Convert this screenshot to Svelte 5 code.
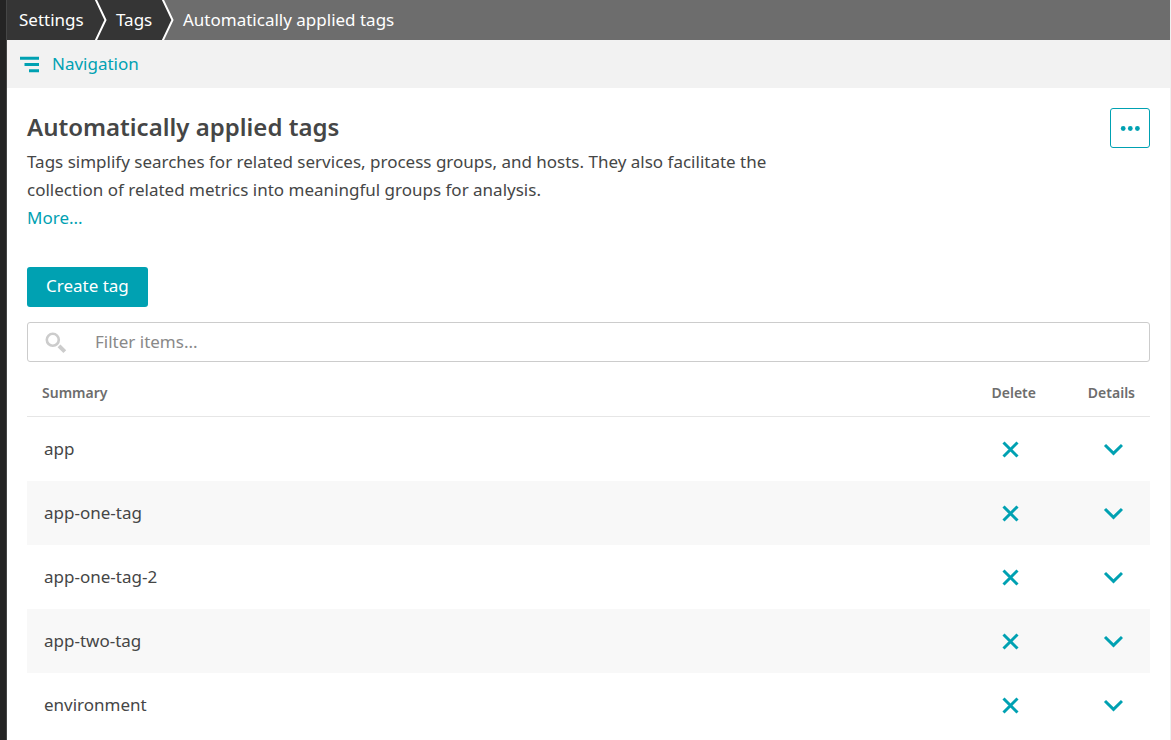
<script>
  const tags = ['app', 'app-one-tag', 'app-one-tag-2', 'app-two-tag', 'environment'];
  let filter = $state('');
  let shown = $derived(tags.filter((tag) => tag.includes(filter.trim().toLowerCase())));
</script>

<div class="shell">
  <div class="page">
    <nav class="crumbs" aria-label="Breadcrumb">
      <a class="crumb first" href="#settings">Settings</a>
      <svg class="sep" width="14" height="40" viewBox="0 0 14 40" aria-hidden="true">
        <path class="dark" d="M0 0H14V40H0Z" />
        <path class="line" d="M0.5 -1L10.5 20L0.5 41" />
      </svg>
      <a class="crumb second" href="#tags">Tags</a>
      <svg class="sep" width="14" height="40" viewBox="0 0 14 40" aria-hidden="true">
        <path class="dark" d="M0 0H0.5L10.5 20L0.5 40H0Z" />
        <path class="line" d="M0.5 -1L10.5 20L0.5 41" />
      </svg>
      <span class="crumb current" aria-current="page">Automatically applied tags</span>
    </nav>

    <div class="navbar">
      <a class="navlink" href="#navigation">
        <svg width="20" height="18" viewBox="0 0 20 18" aria-hidden="true">
          <path d="M0 3.3H19M4.5 9.5H19M9 15.8H19" />
        </svg>
        Navigation
      </a>
    </div>

    <main>
      <header>
        <div class="intro">
          <h1>Automatically applied tags</h1>
          <p>
            Tags simplify searches for related services, process groups, and hosts. They also
            facilitate the collection of related metrics into meaningful groups for analysis.
          </p>
          <a href="#more">More...</a>
        </div>
        <button class="more" type="button" aria-label="More actions">
          <svg width="20" height="6" viewBox="0 0 20 6" aria-hidden="true">
            <circle cx="3.2" cy="3.5" r="2.4" />
            <circle cx="10.3" cy="3.5" r="2.4" />
            <circle cx="17.4" cy="3.5" r="2.4" />
          </svg>
        </button>
      </header>

      <button class="create" type="button">Create tag</button>

      <label class="filter">
        <svg width="22" height="22" viewBox="0 0 22 22" aria-hidden="true">
          <circle cx="7.8" cy="8.8" r="6" />
          <path d="M14 14.8L19.8 20.6" />
        </svg>
        <input type="text" aria-label="Filter items" placeholder="Filter items..." bind:value={filter} />
      </label>

      <table>
        <thead>
          <tr>
            <th class="summary" scope="col">Summary</th>
            <th class="delete" scope="col">Delete</th>
            <th class="details" scope="col">Details</th>
          </tr>
        </thead>
        <tbody>
          {#each shown as tag (tag)}
            <tr>
              <td class="name">{tag}</td>
              <td class="action">
                <button type="button" aria-label="Delete {tag}">
                  <svg width="20" height="20" viewBox="0 0 20 20" aria-hidden="true">
                    <path d="M3.5 3.5L17.5 17.5M17.5 3.5L3.5 17.5" />
                  </svg>
                </button>
              </td>
              <td class="action">
                <button type="button" aria-label="Details of {tag}">
                  <svg width="20" height="20" viewBox="0 0 20 20" aria-hidden="true">
                    <path d="M2 6L10.5 14.3L19 6" />
                  </svg>
                </button>
              </td>
            </tr>
          {/each}
        </tbody>
      </table>
    </main>
  </div>
</div>

<style>
  :global(body) {
    margin: 0;
    background: #fff;
  }
  .shell {
    box-sizing: border-box;
    min-height: 100vh;
    padding-left: 6px;
    background: #242424;
    color: #454646;
    font: 17px/28px 'Noto Sans', sans-serif;
  }
  .page {
    box-sizing: border-box;
    min-height: 100vh;
    border-left: 1px solid #454646;
    border-right: 1px solid #f0f0f0;
    background: #fff;
  }
  a {
    color: #00a1b2;
    text-decoration: none;
  }
  button {
    margin: 0;
    font: inherit;
    cursor: pointer;
  }
  svg {
    display: block;
    flex: none;
    fill: none;
    stroke: #00a1b2;
    stroke-width: 3;
  }
  .crumbs {
    display: flex;
    height: 40px;
    background: #6d6d6d;
    line-height: 40px;
  }
  .crumb {
    color: #fff;
    white-space: nowrap;
  }
  .first,
  .second {
    box-sizing: border-box;
    background: #353535;
  }
  .first {
    width: 88px;
    padding-left: 12px;
  }
  .second {
    width: 53px;
    padding-left: 7px;
  }
  .current {
    padding-left: 7px;
  }
  .sep .dark {
    fill: #353535;
    stroke: none;
  }
  .sep .line {
    stroke: #fff;
    stroke-width: 2;
  }
  .navbar {
    display: flex;
    align-items: center;
    height: 48px;
    padding-left: 13px;
    background: #f2f2f2;
  }
  .navlink {
    display: flex;
    align-items: center;
    gap: 12px;
  }
  main {
    padding: 20px 20px 0;
  }
  header {
    display: flex;
    align-items: flex-start;
    justify-content: space-between;
    gap: 24px;
  }
  .intro {
    max-width: 740px;
  }
  h1 {
    margin: 0;
    padding-bottom: 2px;
    font-size: 24px;
    line-height: 38px;
    font-weight: 600;
  }
  p {
    margin: 0;
  }
  .more {
    display: flex;
    align-items: center;
    justify-content: center;
    width: 40px;
    height: 40px;
    padding: 0;
    border: 1px solid #00a1b2;
    border-radius: 3px;
    background: #fff;
  }
  .more circle {
    fill: #00a1b2;
    stroke: none;
  }
  .create {
    display: block;
    height: 40px;
    margin-top: 35px;
    padding: 0 19px 2px;
    border: 0;
    border-radius: 3px;
    background: #00a1b2;
    color: #fff;
  }
  .filter {
    display: flex;
    align-items: center;
    gap: 28px;
    box-sizing: border-box;
    height: 40px;
    margin-top: 15px;
    padding: 0 16px 0 17px;
    border: 1px solid #ccc;
    border-radius: 3px;
  }
  .filter svg {
    stroke: #ccc;
  }
  .filter path {
    stroke-width: 4;
  }
  .filter circle {
    stroke-width: 2.6;
  }
  input {
    flex: 1;
    min-width: 0;
    padding: 0;
    border: 0;
    outline: 0;
    background: none;
    color: inherit;
    font: inherit;
  }
  input::placeholder {
    color: #898989;
    opacity: 1;
  }
  table {
    width: 100%;
    border-spacing: 0;
    table-layout: fixed;
  }
  th {
    box-sizing: border-box;
    height: 55px;
    padding: 8px 15px 0 0;
    border-bottom: 1px solid #e6e6e6;
    color: #6d6d6d;
    font-size: 14px;
    font-weight: 600;
    text-align: right;
  }
  .summary {
    padding-left: 15px;
    text-align: left;
  }
  .delete {
    width: 132px;
    padding-right: 40px;
  }
  .details {
    width: 74px;
  }
  td {
    height: 64px;
    padding: 0;
  }
  .name {
    padding-left: 17px;
  }
  tbody tr:nth-child(even) {
    background: #f8f8f8;
  }
  .action button {
    display: block;
    margin: 0 auto;
    padding: 0;
    border: 0;
    background: none;
  }
</style>
